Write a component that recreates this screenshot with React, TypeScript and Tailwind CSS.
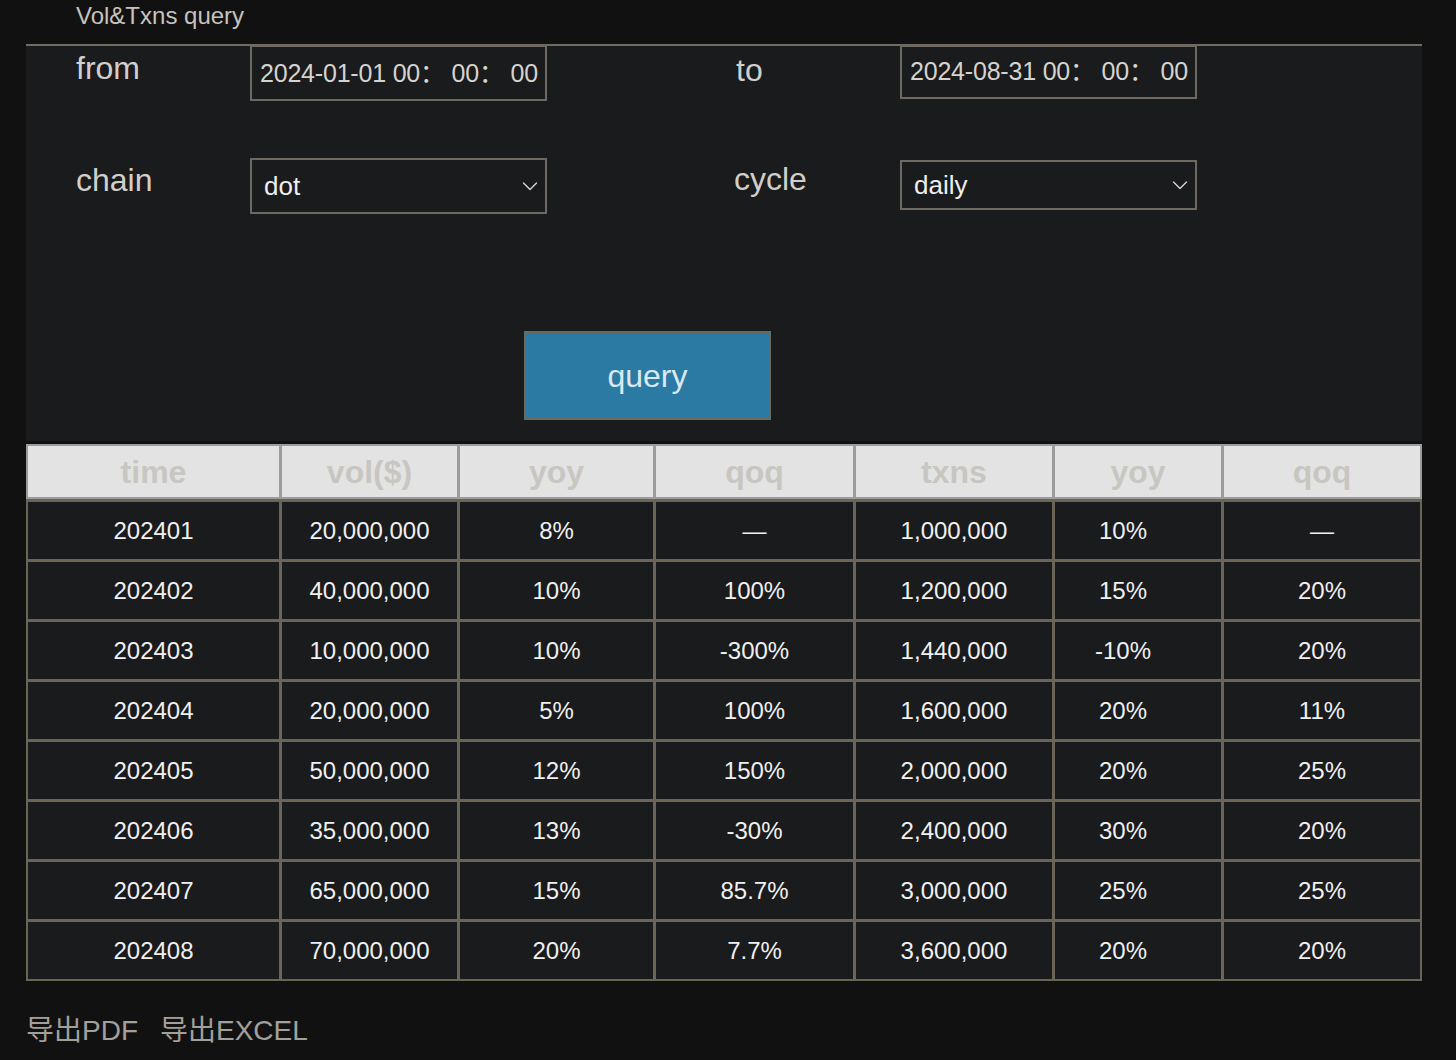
const font = { fontFamily: '"Liberation Sans", "Noto Sans CJK SC", Arial, sans-serif' };

interface Row {
    time: string;
    vol: string;
    volYoy: string;
    volQoq: string;
    txns: string;
    txYoy: string;
    txQoq: string;
}

const rows: Row[] = [
    { time: '202401', vol: '20,000,000', volYoy: '8%', volQoq: '—', txns: '1,000,000', txYoy: '10%', txQoq: '—' },
    { time: '202402', vol: '40,000,000', volYoy: '10%', volQoq: '100%', txns: '1,200,000', txYoy: '15%', txQoq: '20%' },
    { time: '202403', vol: '10,000,000', volYoy: '10%', volQoq: '-300%', txns: '1,440,000', txYoy: '-10%', txQoq: '20%' },
    { time: '202404', vol: '20,000,000', volYoy: '5%', volQoq: '100%', txns: '1,600,000', txYoy: '20%', txQoq: '11%' },
    { time: '202405', vol: '50,000,000', volYoy: '12%', volQoq: '150%', txns: '2,000,000', txYoy: '20%', txQoq: '25%' },
    { time: '202406', vol: '35,000,000', volYoy: '13%', volQoq: '-30%', txns: '2,400,000', txYoy: '30%', txQoq: '20%' },
    { time: '202407', vol: '65,000,000', volYoy: '15%', volQoq: '85.7%', txns: '3,000,000', txYoy: '25%', txQoq: '25%' },
    { time: '202408', vol: '70,000,000', volYoy: '20%', volQoq: '7.7%', txns: '3,600,000', txYoy: '20%', txQoq: '20%' },
];

const headers = ['time', 'vol($)', 'yoy', 'qoq', 'txns', 'yoy', 'qoq'];

function Chevron() {
    return (
        <svg width="18" height="18" viewBox="0 0 18 18" fill="none" className="text-[#d8d5d0]">
            <path d="M2.5 6 L9 12.5 L15.5 6" stroke="currentColor" strokeWidth="1.4" strokeLinecap="round" strokeLinejoin="round" />
        </svg>
    );
}

function DateBox({ value, className }: { value: string; className?: string }) {
    return (
        <div className={`w-[297px] border-2 border-[#6d6961] flex items-center pl-[8px] text-[25px] tracking-[-0.2px] text-[#d6d3ce] whitespace-nowrap ${className ?? ''}`}>
            {value}
        </div>
    );
}

function SelectBox({ value, className }: { value: string; className?: string }) {
    return (
        <div className={`w-[297px] border-2 border-[#6d6961] flex items-center justify-between pl-[12px] pr-[6px] text-[26px] text-[#eeeeee] ${className ?? ''}`}>
            <span>{value}</span>
            <Chevron />
        </div>
    );
}

export default function App() {
    const cols = 'grid grid-cols-[251px_175px_193px_197px_196px_166px_196px] gap-x-[3px]';

    return (
        <div className="min-h-[1060px] bg-[#111111] pb-[10px]" style={font}>
            <div className="h-[44px] pl-[76px] pt-[2px] text-[24px] leading-[28px] text-[#c6c3bd]">Vol&amp;Txns query</div>

            <div className="ml-[26px] w-[1396px] border-t-2 border-[#6f6b63] bg-[#1a1b1d] pb-[21px]">
                <div className="flex pl-[50px]">
                    <div className="w-[174px] pt-[3px] text-[32px] leading-[38px] text-[#d2cfca]">from</div>
                    <DateBox value="2024-01-01 00： 00： 00" className="h-[56px] -mt-[1px] pt-[2px]" />
                    <div className="w-[189px]" />
                    <div className="w-[164px] pt-[5px] text-[32px] leading-[38px] text-[#d2cfca]">to</div>
                    <DateBox value="2024-08-31 00： 00： 00" className="h-[54px] -mt-[1px]" />
                </div>

                <div className="flex pl-[50px] mt-[57px]">
                    <div className="w-[174px] pt-[3px] text-[32px] leading-[38px] text-[#d2cfca]">chain</div>
                    <SelectBox value="dot" className="h-[56px]" />
                    <div className="w-[187px]" />
                    <div className="w-[166px] pt-[2px] text-[32px] leading-[38px] text-[#d2cfca]">cycle</div>
                    <SelectBox value="daily" className="h-[50px] mt-[2px]" />
                </div>

                <button className="ml-[498px] mt-[117px] w-[247px] h-[89px] bg-[#2a7aa3] border-2 border-[#6d6961] text-[32px] text-[#dbe8f0]">
                    query
                </button>
            </div>

            <div className="ml-[26px] w-[1396px] mt-[3px]">
                <div className={`${cols} bg-[#9c9c9c] p-[2px]`}>
                    {headers.map((h, i) => (
                        <div key={i} className="h-[51px] bg-[#e3e3e3] flex items-center justify-center text-[32px] font-bold text-[#c8c6c1]">
                            {h}
                        </div>
                    ))}
                </div>
                <div className={`${cols} gap-y-[3px] bg-[#6b6558] px-[2px] pt-[3px] pb-[2px]`}>
                    {rows.map((r) =>
                        [r.time, r.vol, r.volYoy, r.volQoq, r.txns, r.txYoy, r.txQoq].map((v, i) => (
                            <div
                                key={r.time + i}
                                className={`h-[57px] bg-[#1a1b1d] flex items-center justify-center text-[24px] text-[#f0f0f0] ${i === 5 ? 'pr-[30px]' : ''}`}
                            >
                                {v}
                            </div>
                        ))
                    )}
                </div>
            </div>

            <div className="mt-[33px] pl-[26px] flex gap-[22px] text-[28px] leading-[34px] text-[#a3a09a]">
                <span>导出PDF</span>
                <span>导出EXCEL</span>
            </div>
        </div>
    );
}
